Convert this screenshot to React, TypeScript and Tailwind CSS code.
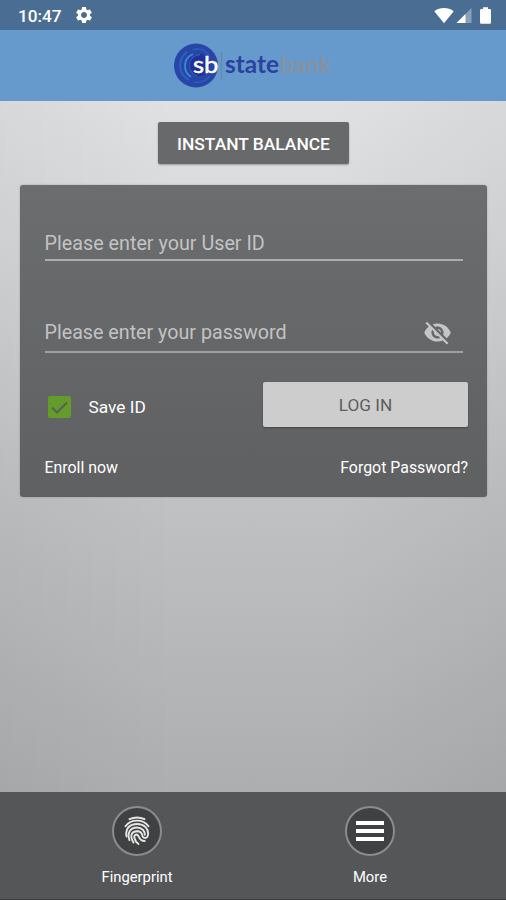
import React, { useState } from 'react';
import { MdSettings, MdVisibilityOff } from 'react-icons/md';

const StatusBar: React.FC = () => (
  <div className="flex h-[30px] shrink-0 items-center justify-between bg-[#4a6d93] pl-[18px] pr-[15px] text-white">
    <div className="flex items-center gap-[12px]">
      <span className="pt-[3px] text-[17.2px] font-medium leading-none">10:47</span>
      <MdSettings size={20} />
    </div>
    <div className="flex items-center">
      <svg width="20" height="17" viewBox="0 0 20 17" fill="currentColor">
        <path d="M0.3 4.2C5.5-.2 14.5-.2 19.7 4.2L10 16.2z" />
      </svg>
      <svg className="ml-[2px]" width="16" height="17" viewBox="0 0 16 17" fill="currentColor">
        <path d="M15.5 1v15H.5z" opacity=".35" />
        <path d="M9.5 7v9H.5z" />
      </svg>
      <svg className="ml-[8px]" width="11" height="17" viewBox="0 0 11 17" fill="currentColor">
        <path d="M3 .3h5v1.7h1.8q1.2 0 1.2 1.2v12.3q0 1.2-1.2 1.2H1.2Q0 16.7 0 15.5V3.2Q0 2 1.2 2H3z" />
      </svg>
    </div>
  </div>
);

const Logo: React.FC = () => (
  <svg width="162" height="48" viewBox="0 0 162 48" role="img" aria-label="state bank">
    <circle cx="23" cy="23.5" r="22" fill="#2746a8" />
    <path d="M14 10A16.5 16.5 0 0 0 16 38" fill="none" stroke="#2d62bd" strokeWidth="2" />
    <path d="M20 12A13 13 0 0 0 18 35" fill="none" stroke="#388cce" strokeWidth="1.8" />
    <path d="M36 13A16 16 0 0 0 20 7.5M37 34A17 17 0 0 1 21 40" fill="none" stroke="#2b60bb" strokeWidth="1.3" />
    <circle cx="26" cy="23" r="11" fill="#23309a" />
    <path d="M27 12.5A11 11 0 0 0 24 34" fill="none" stroke="#2b5cb6" strokeWidth="1.3" />
    <text x="20" y="30.5" textLength="25.5" lengthAdjust="spacingAndGlyphs" className="fill-white stroke-white stroke-[0.5px] font-['Lato',sans-serif] text-[24px]">sb</text>
    <path d="M48.5 10v28" stroke="#6688a9" strokeWidth="1.5" />
    <text x="52" y="31" textLength="54" lengthAdjust="spacingAndGlyphs" className="fill-[#2a42a0] font-['Lato',sans-serif] text-[24px] font-bold">state</text>
    <text x="107" y="31" textLength="51" lengthAdjust="spacingAndGlyphs" className="fill-[#8892a0] stroke-[#8892a0] stroke-[0.5px] font-['Lato',sans-serif] text-[24px]">bank</text>
    <path d="M158.5 30.5h1.5" stroke="#8892a0" />
  </svg>
);

const FingerprintIcon: React.FC = () => (
  <svg width="26" height="30" viewBox="0 0 26 30" fill="none" stroke="#e6e6e6" strokeWidth="1.9" strokeLinecap="round">
    <path d="M5.5 3.2Q13-.2 20.5 3.2" />
    <path d="M1.5 10.2C7 2.8 19 2.8 24.5 10.2" />
    <path d="M2.6 20.5C.6 12.5 6 8 13 8s12.800 5 10.600 12.300c-.7 2.400-4.600 2.300-5.100-.3-.5-3.200-2-4.800-5.200-4.800" />
    <path d="M5.500 24.200C2.700 16.500 6.500 11.500 13 11.500c5 0 8 3.500 7.800 7.300" />
    <path d="M9.500 26.600C5.800 20.500 6.800 15.200 13.300 15.200" />
    <path d="M14.500 28C9.800 24.500 9 18.700 12.500 18.500c3.300 0 1.300 6.700 8.200 6.500" />
  </svg>
);

interface NavItemProps {
  label: string;
  children: React.ReactNode;
}

const NavItem: React.FC<NavItemProps> = ({ label, children }) => (
  <button className="flex w-[100px] flex-col items-center text-white">
    <span className="flex h-[50px] w-[50px] items-center justify-center rounded-full border-2 border-[#8b8c8d] bg-[#404142]">
      {children}
    </span>
    <span className="mt-[12px] text-[14.8px] leading-[18px]">{label}</span>
  </button>
);

export default function App() {
  const [userId, setUserId] = useState('');
  const [password, setPassword] = useState('');
  const [saveId, setSaveId] = useState(true);

  return (
    <div className="flex h-[900px] w-[506px] flex-col overflow-hidden font-['Roboto',sans-serif]">
      <StatusBar />

      <header className="flex h-[71px] shrink-0 items-center bg-[#669acd] pl-[173px]">
        <Logo />
      </header>

      <main className="flex flex-1 flex-col items-center bg-[linear-gradient(90deg,#0000000a,transparent_35%,transparent_65%,#0000000a),linear-gradient(#e0e1e2,#d7d8da_20%,#bfc0c2_60%,#adaeb0)] pt-[21px]">
        <button className="h-[42px] w-[191px] rounded-[2px] bg-[#68696a] pl-[1px] pt-[2px] text-[17.4px] font-medium text-white shadow-[0_1px_2px_rgba(0,0,0,0.3)]">
          INSTANT BALANCE
        </button>

        <section className="mr-[-1px] mt-[21px] flex h-[312px] w-[467px] flex-col rounded-[3px] bg-linear-to-b from-[#6c6d6e] to-[#5f6061] pl-[24.5px] pr-[19px] shadow-[0_0_2px_rgba(0,0,0,0.25)]">
          <div className="mt-[41px] flex h-[35px] w-[418px] items-center border-b-2 border-[#abacad]">
            <input
              value={userId}
              onChange={(e) => setUserId(e.target.value)}
              placeholder="Please enter your User ID"
              className="w-full pt-[3px] text-[19.75px] text-white outline-none placeholder:text-[#c2c3c4]"
            />
          </div>

          <div className="mt-[51px] flex h-[41px] w-[418px] items-center border-b-2 border-[#9fa0a1] pr-[11px]">
            <input
              type="password"
              value={password}
              onChange={(e) => setPassword(e.target.value)}
              placeholder="Please enter your password"
              className="min-w-0 flex-1 pt-[3px] text-[19.7px] text-white outline-none placeholder:text-[#c2c3c4]"
            />
            <MdVisibilityOff size={29} className="mt-[2px] text-[#c4c5c6]" />
          </div>

          <div className="mt-[29px] flex h-[45px] items-center justify-between">
            <button onClick={() => setSaveId(!saveId)} className="flex items-center gap-[18px] pl-[3px] pt-[5px] text-white">
              <span className="flex h-[22px] w-[23px] items-center justify-center rounded-[2px] bg-[#649c2c]">
                {saveId && (
                  <svg width="17" height="13" viewBox="0 0 17 13" fill="none" stroke="#586058" strokeWidth="2">
                    <path d="M1 6.5l5 5L16 1.5" />
                  </svg>
                )}
              </span>
              <span className="pt-[2px] text-[17.3px]">Save ID</span>
            </button>
            <button className="h-[45px] w-[205px] rounded-[2px] bg-[#cdcdcd] pt-[3px] text-[17.2px] text-[#5c5d5e] shadow-[0_1px_2px_rgba(0,0,0,0.3)]">
              LOG IN
            </button>
          </div>

          <div className="mt-[31px] flex items-center justify-between text-[15.9px] leading-[20px] text-white">
            <a>Enroll now</a>
            <a>Forgot Password?</a>
          </div>
        </section>
      </main>

      <footer className="flex h-[108px] shrink-0 justify-between border-b border-[#3c3d3e] bg-[#555658] pl-[87px] pr-[86px] pt-[14px]">
        <NavItem label="Fingerprint">
          <FingerprintIcon />
        </NavItem>
        <NavItem label="More">
          <span className="flex w-[28px] flex-col gap-[4px]">
            <span className="h-[4px] bg-white" />
            <span className="h-[4px] bg-white" />
            <span className="h-[4px] bg-white" />
          </span>
        </NavItem>
      </footer>
    </div>
  );
}
